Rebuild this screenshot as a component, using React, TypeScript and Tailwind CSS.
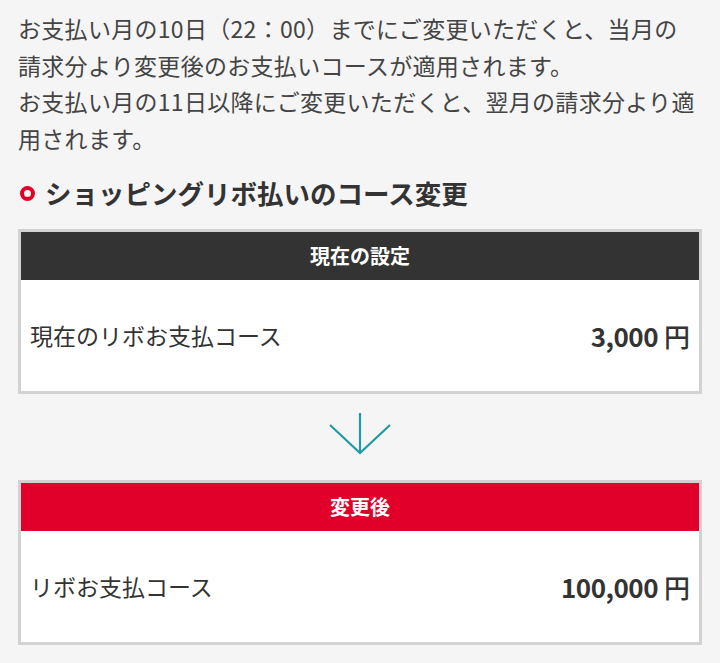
import React from 'react';

interface CourseCardProps {
  title: string;
  label: string;
  amount: string;
  headerClass: string;
}

function CourseCard({ title, label, amount, headerClass }: CourseCardProps) {
  return (
    <div className="border-[3px] border-[#d2d2d2] bg-white">
      <div className={`flex h-[48px] items-center justify-center text-[20px] font-bold text-white ${headerClass}`}>
        {title}
      </div>
      <div className="flex h-[111px] items-center justify-between pl-[9px] pr-[9px]">
        <span className="text-[23px] text-[#333]">{label}</span>
        <span className="text-[26px] text-[#333]">
          <span className="font-bold tracking-[-0.5px]">{amount}</span>
          <span className="ml-[6px] font-medium">円</span>
        </span>
      </div>
    </div>
  );
}

export default function App() {
  return (
    <div
      className="min-h-[663px] bg-[#f5f5f5] px-[18px] pb-[18px] pt-[10px]"
      style={{ fontFamily: '"Noto Sans CJK JP", "Noto Sans", sans-serif' }}
    >
      {/* 適用時期の説明 */}
      <p className="whitespace-nowrap text-[23px] leading-[36.5px] tracking-[0.3px] text-[#444]">
        お支払い月の10日（22：00）までにご変更いただくと、当月の
        <br />
        請求分より変更後のお支払いコースが適用されます。
        <br />
        お支払い月の11日以降にご変更いただくと、翌月の請求分より適
        <br />
        用されます。
      </p>

      {/* 見出し */}
      <h2 className="mt-[19px] flex h-[36px] items-center gap-[10px] text-[26.5px] font-bold text-[#333]">
        <span className="ml-[2px] h-[15px] w-[15px] rounded-full border-[4px] border-[#e0002a]" />
        ショッピングリボ払いのコース変更
      </h2>

      <div className="mt-[18px]">
        <CourseCard
          title="現在の設定"
          label="現在のリボお支払コース"
          amount="3,000"
          headerClass="bg-[#333333]"
        />
      </div>

      <div className="flex justify-center pb-[25px] pt-[19px]">
        <svg width="62" height="42" viewBox="0 0 62 42" fill="none" stroke="#1f9aa6" strokeWidth="2.2">
          <path d="M31 0 L31 40" />
          <path d="M1 12 L31 40 L61 12" />
        </svg>
      </div>

      <CourseCard
        title="変更後"
        label="リボお支払コース"
        amount="100,000"
        headerClass="bg-[#e0002a]"
      />
    </div>
  );
}
